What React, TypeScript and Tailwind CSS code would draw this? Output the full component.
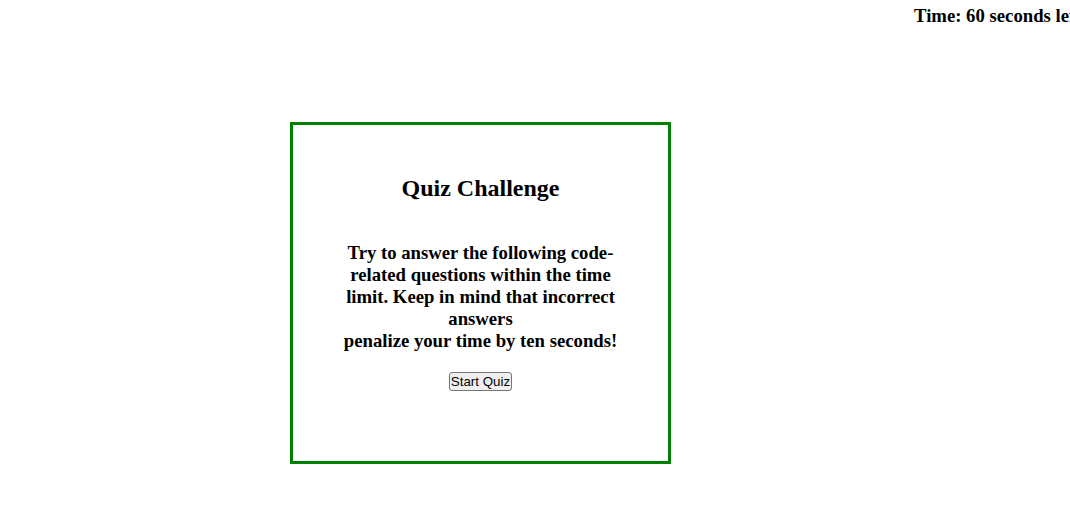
import React from "react";

export default function App() {
  return (
    <div className="min-h-[523px] bg-white text-black overflow-hidden font-['Liberation_Serif',serif]">
      <div className="pt-[5px] pl-[914px] whitespace-nowrap text-[18.72px] font-bold leading-[21.5px]">
        Time: 60 seconds left
      </div>

      <div className="ml-[290px] mt-[95px] w-[381px] h-[342px] border-[3px] border-[#008000] flex flex-col items-center">
        <h2 className="mt-[50px] text-[24px] font-bold leading-[27.6px]">Quiz Challenge</h2>
        <p className="mt-[40px] w-[300px] text-center text-[18.72px] font-bold leading-[22px]">
          Try to answer the following code-related questions within the time limit. Keep in mind that incorrect answers
          <br />
          penalize your time by ten seconds!
        </p>
        <button className="mt-[20px] px-px py-px bg-[#efefef] border border-[#767676] rounded-[3px] text-[13.33px] leading-[15px] font-['Liberation_Sans',Arial,sans-serif]">
          Start Quiz
        </button>
      </div>
    </div>
  );
}
